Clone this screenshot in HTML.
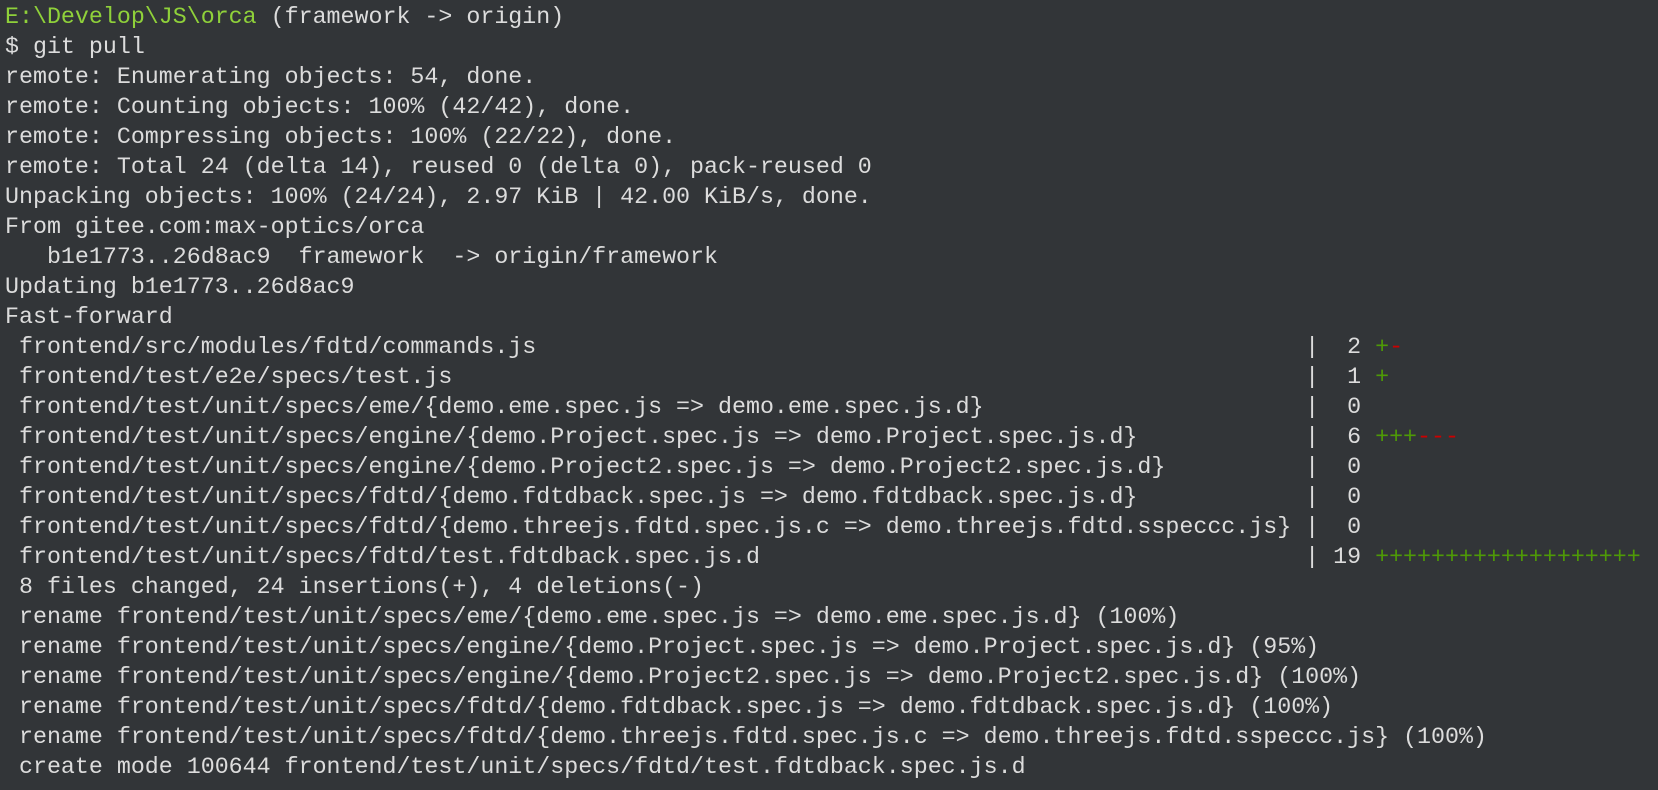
<!DOCTYPE html>
<html><head><meta charset="utf-8"><style>
html,body{margin:0;padding:0;background:#323538;width:1658px;height:790px;overflow:hidden}
pre{margin:0;padding:2px 0 0 5px;font-family:"Liberation Mono","DejaVu Sans Mono",monospace;font-size:23.3px;line-height:30px;color:#dcdcdc;white-space:pre}
.g{color:#8fd13a}.p{color:#4e9a06}.m{color:#cc0000}
</style></head><body><pre><span class="g">E:\Develop\JS\orca</span> (framework -&gt; origin)
$ git pull
remote: Enumerating objects: 54, done.
remote: Counting objects: 100% (42/42), done.
remote: Compressing objects: 100% (22/22), done.
remote: Total 24 (delta 14), reused 0 (delta 0), pack-reused 0
Unpacking objects: 100% (24/24), 2.97 KiB | 42.00 KiB/s, done.
From gitee.com:max-optics/orca
   b1e1773..26d8ac9  framework  -&gt; origin/framework
Updating b1e1773..26d8ac9
Fast-forward
 frontend/src/modules/fdtd/commands.js                                                       |  2 <span class="p">+</span><span class="m">-</span>
 frontend/test/e2e/specs/test.js                                                             |  1 <span class="p">+</span>
 frontend/test/unit/specs/eme/{demo.eme.spec.js =&gt; demo.eme.spec.js.d}                       |  0
 frontend/test/unit/specs/engine/{demo.Project.spec.js =&gt; demo.Project.spec.js.d}            |  6 <span class="p">+++</span><span class="m">---</span>
 frontend/test/unit/specs/engine/{demo.Project2.spec.js =&gt; demo.Project2.spec.js.d}          |  0
 frontend/test/unit/specs/fdtd/{demo.fdtdback.spec.js =&gt; demo.fdtdback.spec.js.d}            |  0
 frontend/test/unit/specs/fdtd/{demo.threejs.fdtd.spec.js.c =&gt; demo.threejs.fdtd.sspeccc.js} |  0
 frontend/test/unit/specs/fdtd/test.fdtdback.spec.js.d                                       | 19 <span class="p">+++++++++++++++++++</span>
 8 files changed, 24 insertions(+), 4 deletions(-)
 rename frontend/test/unit/specs/eme/{demo.eme.spec.js =&gt; demo.eme.spec.js.d} (100%)
 rename frontend/test/unit/specs/engine/{demo.Project.spec.js =&gt; demo.Project.spec.js.d} (95%)
 rename frontend/test/unit/specs/engine/{demo.Project2.spec.js =&gt; demo.Project2.spec.js.d} (100%)
 rename frontend/test/unit/specs/fdtd/{demo.fdtdback.spec.js =&gt; demo.fdtdback.spec.js.d} (100%)
 rename frontend/test/unit/specs/fdtd/{demo.threejs.fdtd.spec.js.c =&gt; demo.threejs.fdtd.sspeccc.js} (100%)
 create mode 100644 frontend/test/unit/specs/fdtd/test.fdtdback.spec.js.d</pre></body></html>
